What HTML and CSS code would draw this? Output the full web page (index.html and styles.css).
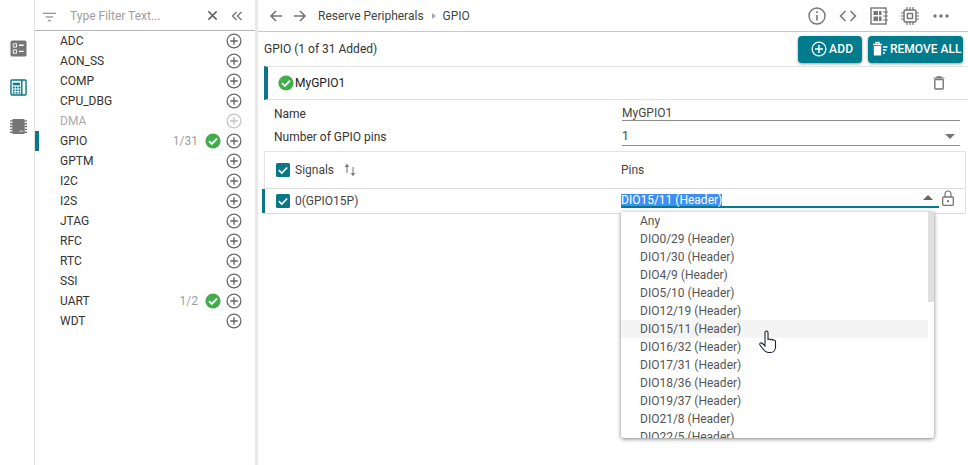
FILE: index.html
```html
<!DOCTYPE html>
<html lang="en">
<head>
<meta charset="utf-8">
<title>Reserve Peripherals</title>
<link rel="stylesheet" href="styles.css">
</head>
<body>
<svg class="defs" width="0" height="0" aria-hidden="true">
  <symbol id="plus" viewBox="0 0 16 16"><circle cx="8" cy="8" r="6.9" fill="none" stroke="currentColor" stroke-width="1.3"/><path d="M8 4.2v7.6M4.2 8h7.6" stroke="currentColor" stroke-width="1.4" fill="none"/></symbol>
  <symbol id="ok" viewBox="0 0 16 16"><circle cx="8" cy="8" r="7.6" fill="#43ac4d"/><path d="M4 8.2l2.8 2.7L12 5.6" fill="none" stroke="#fff" stroke-width="1.8"/></symbol>
  <symbol id="check" viewBox="0 0 14 14"><rect width="14" height="14" rx="1.5" fill="#0a7686"/><path d="M2.8 7.2l3 2.9 5.4-5.6" fill="none" stroke="#fff" stroke-width="1.7"/></symbol>
</svg>
<div class="app">
  <nav class="rail">
    <svg class="rail-icon" viewBox="0 0 18 18"><rect x="0.5" y="0.5" width="17" height="17" rx="2" fill="#757575"/><path d="M3.5 4h3.5v3.500H3.500zM3.500 10.500h3.500V14H3.500z" fill="none" stroke="#fff"/><path d="M9.500 5.500h5M9.500 12h5" stroke="#fff" stroke-width="1.500"/></svg>
    <svg class="rail-icon" viewBox="0 0 18 18"><rect x="1" y="1" width="16" height="16" rx="1" fill="none" stroke="#0a7686" stroke-width="1.500"/><path d="M12.500 1v16" stroke="#0a7686" stroke-width="1.500"/><path d="M3 4h7.500v2.500H3zM3 8h2v2H3zM6 8h2v2H6zM9 8h2v2H9zM3 11h2v2H3zM6 11h2v2H6zM9 11h2v2H9zM3 14h2v1.500H3zM6 14h2v1.500H6zM9 14h2v1.500H9z" fill="#0a7686"/></svg>
    <svg class="rail-icon" viewBox="0 0 18 18"><rect x="2.500" y="1" width="13" height="16" rx="1" fill="#757575"/><path d="M0 3h3M0 6h3M0 9h3M0 12h3M0 15h3M15 3h3M15 6h3M15 9h3M15 12h3M15 15h3" stroke="#757575" stroke-width="1.500"/><path d="M10 14h4" stroke="#ddd" stroke-width="1"/></svg>
  </nav>
  <aside class="side">
    <div class="filter">
      <svg class="filter-icon" viewBox="0 0 16 12"><path d="M1 2h14M4 6h8M6.500 10h3" stroke="#757575" stroke-width="1.300"/></svg>
      <span class="filter-text">Type Filter Text...</span>
      <svg class="filter-x" viewBox="0 0 12 12"><path d="M1.500 1.500l9 9M10.500 1.500l-9 9" stroke="#616161" stroke-width="1.600"/></svg>
      <svg class="filter-c" viewBox="0 0 12 12"><path d="M5.500 2L1.500 6l4 4M10.500 2L6.500 6l4 4" fill="none" stroke="#757575" stroke-width="1.300"/></svg>
    </div>
    <ul class="list">
      <li class="item"><span class="name">ADC</span><svg class="add"><use href="#plus"/></svg></li>
      <li class="item"><span class="name">AON_SS</span><svg class="add"><use href="#plus"/></svg></li>
      <li class="item"><span class="name">COMP</span><svg class="add"><use href="#plus"/></svg></li>
      <li class="item"><span class="name">CPU_DBG</span><svg class="add"><use href="#plus"/></svg></li>
      <li class="item off"><span class="name">DMA</span><svg class="add"><use href="#plus"/></svg></li>
      <li class="item cur"><span class="name">GPIO</span><span class="count">1/31</span><svg class="ok"><use href="#ok"/></svg><svg class="add"><use href="#plus"/></svg></li>
      <li class="item"><span class="name">GPTM</span><svg class="add"><use href="#plus"/></svg></li>
      <li class="item"><span class="name">I2C</span><svg class="add"><use href="#plus"/></svg></li>
      <li class="item"><span class="name">I2S</span><svg class="add"><use href="#plus"/></svg></li>
      <li class="item"><span class="name">JTAG</span><svg class="add"><use href="#plus"/></svg></li>
      <li class="item"><span class="name">RFC</span><svg class="add"><use href="#plus"/></svg></li>
      <li class="item"><span class="name">RTC</span><svg class="add"><use href="#plus"/></svg></li>
      <li class="item"><span class="name">SSI</span><svg class="add"><use href="#plus"/></svg></li>
      <li class="item"><span class="name">UART</span><span class="count">1/2</span><svg class="ok"><use href="#ok"/></svg><svg class="add"><use href="#plus"/></svg></li>
      <li class="item"><span class="name">WDT</span><svg class="add"><use href="#plus"/></svg></li>
    </ul>
  </aside>
  <main class="main">
    <header class="top">
      <svg class="nav" viewBox="0 0 14 14"><path d="M13 7H2M7 2L2 7l5 5" fill="none" stroke="#757575" stroke-width="1.500"/></svg>
      <svg class="nav" viewBox="0 0 14 14"><path d="M1 7h11M7 2l5 5-5 5" fill="none" stroke="#757575" stroke-width="1.500"/></svg>
      <span class="crumb crumb-first">Reserve Peripherals</span>
      <span class="crumb-sep"></span>
      <span class="crumb">GPIO</span>
      <div class="tools">
        <svg class="tool" viewBox="0 0 18 18"><circle cx="9" cy="9" r="8" fill="none" stroke="#757575" stroke-width="1.400"/><path d="M9 8v5.500" stroke="#757575" stroke-width="1.600"/><circle cx="9" cy="5.300" r="1" fill="#757575"/></svg>
        <svg class="tool" viewBox="0 0 18 18"><path d="M6.500 4L1.500 9l5 5M11.500 4l5 5-5 5" fill="none" stroke="#757575" stroke-width="1.500"/></svg>
        <svg class="tool" viewBox="0 0 18 18"><rect x="1" y="1" width="15" height="16" fill="none" stroke="#757575" stroke-width="1.400"/><path d="M3.500 4h4.500v4H3.500zM9 4h2.500v4H9zM3.500 9.500H8V14H3.500zM9 9.500h2.500V14H9z" fill="#757575"/><path d="M13 5h5M13 9h5M13 13h5" stroke="#757575"/></svg>
        <svg class="tool" viewBox="0 0 18 18"><rect x="3" y="3" width="12" height="12" rx="1.500" fill="none" stroke="#757575" stroke-width="1.500"/><rect x="6.500" y="6.500" width="5" height="5" fill="none" stroke="#757575" stroke-width="1.400"/><path d="M6 0v3M9 0v3M12 0v3M6 15v3M9 15v3M12 15v3M0 6h3M0 9h3M0 12h3M15 6h3M15 9h3M15 12h3" stroke="#757575" stroke-width="1.200"/></svg>
        <svg class="tool" viewBox="0 0 18 18"><circle cx="3" cy="9" r="1.700" fill="#757575"/><circle cx="9" cy="9" r="1.700" fill="#757575"/><circle cx="15" cy="9" r="1.700" fill="#757575"/></svg>
      </div>
    </header>
    <section class="summary">
      <span class="summary-title">GPIO (1 of 31 Added)</span>
      <button class="btn btn-add"><svg class="btn-icon" viewBox="0 0 16 16"><circle cx="8" cy="8" r="6.900" fill="none" stroke="#fff" stroke-width="1.300"/><path d="M8 4v8M4 8h8" stroke="#fff" stroke-width="1.500"/></svg>ADD</button>
      <button class="btn btn-rem"><svg class="btn-icon" viewBox="0 0 16 16"><path d="M1 3.500h9M4 3V1.500h3V3" fill="none" stroke="#fff" stroke-width="1.300"/><path d="M1.800 5h7.400v9.500H1.800z" fill="#fff"/><path d="M11 6h4.500M11 9h3.500M11 12h2" stroke="#fff" stroke-width="1.300"/></svg>REMOVE ALL</button>
    </section>
    <section class="inst">
      <svg class="inst-ok"><use href="#ok"/></svg>
      <span class="inst-name">MyGPIO1</span>
      <svg class="trash" viewBox="0 0 12 14"><path d="M0.500 2h11M4 2V0.800h4V2" fill="none" stroke="#757575" stroke-width="1.200"/><rect x="1.800" y="3.500" width="8.400" height="9.500" rx="0.700" fill="none" stroke="#757575" stroke-width="1.400"/></svg>
    </section>
    <div class="field">
      <span class="label">Name</span>
      <span class="value">MyGPIO1</span>
    </div>
    <div class="field field-2">
      <span class="label">Number of GPIO pins</span>
      <span class="value">1<i class="tri-down"></i></span>
    </div>
    <div class="table">
      <div class="thead">
        <div class="cell-a"><svg class="cb"><use href="#check"/></svg><span class="th">Signals</span>
          <svg class="sort" viewBox="0 0 12 14"><path d="M3 10V3" fill="none" stroke="#757575" stroke-width="1"/><path d="M0.800 4L3 0.800 5.200 4z" fill="#757575"/><path d="M9 4v7" fill="none" stroke="#757575" stroke-width="1"/><path d="M6.800 10L9 13.200 11.200 10z" fill="#757575"/></svg>
        </div>
        <span class="pins-h">Pins</span>
      </div>
      <div class="trow">
        <div class="cell-a"><svg class="cb"><use href="#check"/></svg><span class="sig">0(GPIO15P)</span></div>
        <div class="pin-cell"><span class="sel">DIO15/11 (Header)</span><i class="tri-up"></i></div>
        <svg class="lock" viewBox="0 0 12 16"><path d="M3 7V4a3 3 0 0 1 6 0v3" fill="none" stroke="#757575" stroke-width="1.200"/><rect x="0.700" y="7" width="10.600" height="8.300" rx="1" fill="none" stroke="#757575" stroke-width="1.300"/><circle cx="6" cy="11.200" r="1.100" fill="#757575"/></svg>
      </div>
    </div>
    <div class="menu">
      <ul class="opts">
        <li>Any</li>
        <li>DIO0/29 (Header)</li>
        <li>DIO1/30 (Header)</li>
        <li>DIO4/9 (Header)</li>
        <li>DIO5/10 (Header)</li>
        <li>DIO12/19 (Header)</li>
        <li class="hover">DIO15/11 (Header)</li>
        <li>DIO16/32 (Header)</li>
        <li>DIO17/31 (Header)</li>
        <li>DIO18/36 (Header)</li>
        <li>DIO19/37 (Header)</li>
        <li>DIO21/8 (Header)</li>
        <li>DIO22/5 (Header)</li>
      </ul>
      <div class="thumb"></div>
    </div>
    <svg class="cursor" viewBox="0 0 18 24"><path d="M6 2.500c0-2 3-2 3 0V10c0-1.300 2.500-1.300 2.500.3 0-1.300 2.500-1.300 2.500.4 0-1 2.500-1 2.500.8V17c0 3-2 5.500-5 5.500H9c-2.500 0-3.500-1.500-5-3.500l-3-4c-1-1.500 1-3 2.500-1.500L6 16z" fill="#fff" stroke="#1c2530" stroke-width="1.100"/></svg>
  </main>
</div>
</body>
</html>
```
FILE: styles.css
```css
* { box-sizing: border-box; }
html, body { margin: 0; height: 100%; }
body { font-family: Roboto, "Liberation Sans", sans-serif; font-size: 12px; color: #333; background: #fff; overflow: hidden; }
.defs { position: absolute; }
.app { display: flex; width: 968px; height: 465px; }
.rail { width: 35px; flex: none; display: flex; flex-direction: column; align-items: center; padding: 40px 0 0 2px; gap: 22px; border-right: 1px solid #e3e3e3; }
.rail-icon { width: 17px; height: 17px; }
.side { width: 223px; flex: none; border-right: 3px solid #e8e8e8; }
.filter { height: 31px; display: flex; align-items: center; padding: 1px 0 0 7px; border-bottom: 1px solid #b5b5b5; }
.filter-icon { width: 15px; height: 12px; margin-top: 2px; }
.filter-text { margin-left: 13px; color: #9e9e9e; font-size: 12px; width: 137px; }
.filter-x { width: 11px; height: 11px; }
.filter-c { width: 12px; height: 12px; margin-left: 13px; }
.list { list-style: none; margin: 0; padding: 0; }
.item { height: 20px; display: flex; align-items: center; padding: 0 13px 0 25px; position: relative; color: #333; }
.item.cur::before { content: ""; position: absolute; left: 0; top: 0; width: 4px; height: 20px; background: #0a7686; }
.name { flex: 1; }
.count { color: #9e9e9e; margin-right: 7px; }
.ok { width: 16px; height: 16px; margin-right: 5px; }
.add { width: 16px; height: 16px; color: #666; }
.off .name { color: #aaa; }
.off .add { color: #c4c4c4; }
.main { flex: 1; position: relative; min-width: 0; }
.top { height: 32px; display: flex; align-items: center; padding-left: 11px; border-bottom: 1px solid #c8c8c8; }
.nav { width: 14px; height: 14px; margin-right: 10px; }
.crumb { color: #444; }
.crumb-first { margin-left: 1px; }
.crumb-sep { width: 0; height: 0; border-left: 4px solid #a8a8a8; border-top: 3.500px solid transparent; border-bottom: 3.500px solid transparent; margin: 0 7px 0 8px; }
.tools { margin-left: auto; display: flex; gap: 13px; padding-right: 18px; }
.tool { width: 18px; height: 18px; }
.summary { height: 34px; display: flex; align-items: center; padding: 0 5px 0 6px; gap: 6px; }
.summary-title { flex: 1; color: #333; }
.btn { height: 27px; border: 0; border-radius: 4px; background: #007c8c; color: #fff; font: 500 12px Roboto, "Liberation Sans", sans-serif; display: flex; align-items: center; justify-content: flex-start; box-shadow: 0 1px 3px rgba(0,0,0,.4); }
.btn-add { width: 64px; letter-spacing: 0.2px; padding: 0 0 0 13px; }
.btn-rem { width: 95px; padding: 0 0 0 4px; }
.btn-icon { width: 16px; height: 16px; margin-right: 2px; flex: none; }
.inst { height: 34px; margin-left: 6px; display: flex; align-items: center; border-top: 1px solid #e3e3e3; border-bottom: 1px solid #e3e3e3; border-left: 4px solid #0a7686; padding: 0 23px 0 10px; }
.inst-ok { width: 16px; height: 16px; }
.inst-name { flex: 1; margin-left: 1px; color: #222; }
.trash { width: 12px; height: 14px; }
.field { height: 17px; margin-top: 4px; display: flex; padding-left: 16px; align-items: center; }
.field-2 { margin-top: 5px; height: 20px; }
.label { width: 348px; color: #333; padding-top: 2px; }
.value { width: 338px; color: #444; border-bottom: 1px solid #8e8e8e; height: 100%; display: flex; align-items: center; justify-content: space-between; padding: 1px 5px 0 0; }
.tri-down { width: 0; height: 0; border-top: 5px solid #757575; border-left: 5px solid transparent; border-right: 5px solid transparent; }
.table { margin: 5px 0 0 6px; width: 702px; border: 1px solid #e3e3e3; border-bottom: 1px solid #dcdcdc; }
.thead { height: 37px; display: flex; align-items: center; border-bottom: 1px solid #dcdcdc; }
.cell-a { width: 346px; display: flex; align-items: center; padding-left: 11px; flex: none; }
.cb { width: 14px; height: 14px; }
.th { margin-left: 5px; color: #444; }
.sort { width: 12px; height: 14px; margin-left: 10px; }
.pins-h { color: #444; margin-left: 10px; }
.trow { height: 24px; display: flex; align-items: center; position: relative; box-shadow: -3px 0 0 #0a7686; }
.sig { margin-left: 5px; color: #444; }
.pin-cell { margin-left: 10px; width: 318px; height: 19px; align-self: flex-start; display: flex; align-items: center; justify-content: space-between; padding-right: 6px; border-bottom: 2px solid #007c8c; }
.sel { background: #3d8ff5; color: #fff; line-height: 12px; align-self: flex-end; }
.tri-up { width: 0; height: 0; border-bottom: 5px solid #666; border-left: 5px solid transparent; border-right: 5px solid transparent; }
.lock { width: 12px; height: 16px; margin-left: 3px; align-self: flex-start; margin-top: 1px; }
.menu { position: absolute; left: 363px; top: 212px; width: 313px; height: 226px; background: #fff; border-radius: 0 0 3px 3px; box-shadow: 0 1px 4px rgba(0,0,0,.5); overflow: hidden; }
.opts { list-style: none; margin: 0; padding: 0 6px 0 0; color: #555; }
.opts li { height: 18px; line-height: 18px; padding-left: 19px; }
.opts .hover { background: #f4f4f4; }
.thumb { position: absolute; right: 0; top: 0; width: 6px; height: 90px; background: #e0e0e0; }
.cursor { position: absolute; left: 501px; top: 330px; width: 18px; height: 24px; }
```
